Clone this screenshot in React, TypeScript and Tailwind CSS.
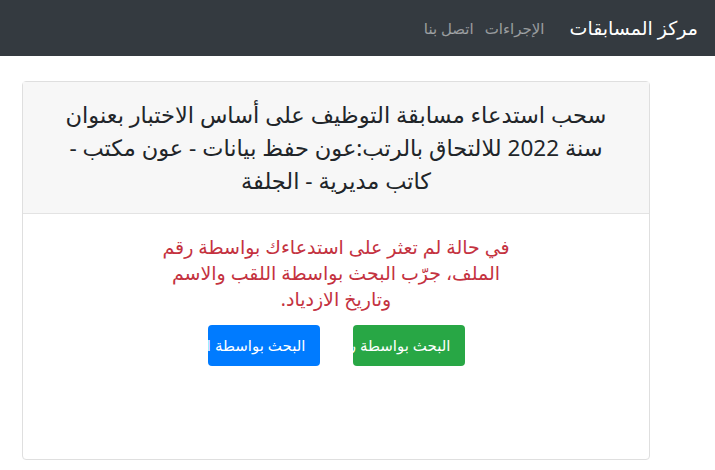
export default function App() {
  return (
    <div dir="rtl" className="min-h-screen bg-white" style={{ fontFamily: '"Noto Sans", "DejaVu Sans", sans-serif' }}>
      <nav className="flex h-[56px] items-center gap-[25px] bg-[#343a40] px-[17px]">
        <span className="text-[19px] text-white">مركز المسابقات</span>
        <div className="flex items-center gap-[11px] text-[15px] text-white/50">
          <a href="#">الإجراءات</a>
          <a href="#">اتصل بنا</a>
        </div>
      </nav>

      <div className="mr-[65px] mt-[25px] w-[628px] h-[379px] rounded-[4px] border border-[#dfdfdf] flex flex-col">
        <div className="bg-[#f7f7f7] border-b border-[#e3e3e3] h-[132px] flex items-center justify-center px-[20px]">
          <h1 className="text-center text-[22.5px] leading-[33px] text-[#212529]">
            سحب استدعاء مسابقة التوظيف على أساس الاختبار بعنوان
            <br />
            سنة 2022 للالتحاق بالرتب:عون حفظ بيانات - عون مكتب -
            <br />
            كاتب مديرية - الجلفة
          </h1>
        </div>
        <div className="flex flex-col items-center pt-[20px]">
          <p className="text-center text-[19px] leading-[26px] text-[#c4323f]">
            في حالة لم تعثر على استدعاءك بواسطة رقم
            <br />
            الملف، جرّب البحث بواسطة اللقب والاسم
            <br />
            وتاريخ الازدياد.
          </p>
          <div className="mt-[13px] flex gap-[33px]">
            <button className="h-[41px] w-[112px] overflow-hidden whitespace-nowrap rounded-[4px] bg-[#28a745] px-[14px] text-right text-[15px] text-white">
              البحث بواسطة رقم الملف
            </button>
            <button className="h-[41px] w-[112px] overflow-hidden whitespace-nowrap rounded-[4px] bg-[#007bff] px-[14px] text-right text-[15px] text-white">
              البحث بواسطة اللقب والاسم
            </button>
          </div>
        </div>
      </div>
    </div>
  );
}
